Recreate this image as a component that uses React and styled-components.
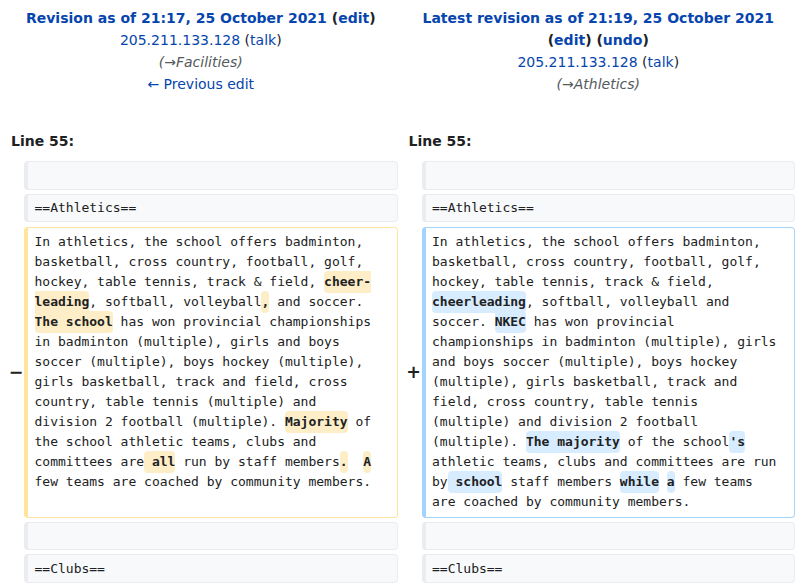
import React from 'react';
import styled, { createGlobalStyle } from 'styled-components';

const GlobalStyle = createGlobalStyle`
  body {
    margin: 0;
    background: #fff;
    color: #202122;
    font-family: 'DejaVu Sans', sans-serif;
  }
`;

const DiffTable = styled.div`
  display: grid;
  grid-template-columns: 16px 1fr 16px 1fr;
  column-gap: 4px;
  row-gap: 4px;
  padding: 7px 4px 0;
  width: 799px;
  box-sizing: border-box;
`;

const TitleCell = styled.div`
  grid-column: span 2;
  text-align: center;
  font-size: 14px;
  line-height: 22px;
  padding-bottom: 31px;
`;

const TitleLine = styled.div`
  font-weight: ${(p) => (p.$bold ? 'bold' : 'normal')};
`;

const Link = styled.a`
  color: #0645ad;
  text-decoration: none;
`;

const Summary = styled.div`
  font-style: italic;
  color: #54595d;
`;

const LineNo = styled.div`
  grid-column: span 2;
  font-size: 14px;
  line-height: 22px;
  font-weight: bold;
  padding: 0 0 5px 7px;
`;

const Marker = styled.div`
  display: flex;
  align-items: center;
  justify-content: center;
  padding-left: 8px;
  font-size: 17.5px;
  font-weight: bold;
  color: #202122;
`;

const borders = {
  context: '#eaecf0',
  deleted: '#ffe49c',
  added: '#a3d3ff',
};

const Line = styled.div`
  font-family: 'DejaVu Sans Mono', monospace;
  font-size: 13px;
  line-height: 20px;
  white-space: pre-wrap;
  word-wrap: break-word;
  padding: ${(p) => (p.$kind === 'context' ? '3.25px' : '4.25px')} 12px
    ${(p) => (p.$kind === 'context' ? '3.25px' : '4.5px')} 6.5px;
  margin-top: ${(p) => (p.$kind === 'context' ? '0' : '1px')};
  min-height: 20px;
  border: 1px solid ${(p) => borders[p.$kind]};
  border-left-width: 4px;
  border-radius: 4px;
  background: ${(p) => (p.$kind === 'context' ? '#f8f9fa' : '#fff')};
`;

const Change = styled.span`
  font-weight: bold;
  border-radius: 4px;
  padding: 3.25px 0;
  background: ${(p) => (p.$kind === 'added' ? '#d8ecff' : '#feeec8')};
`;

const Del = (props) => <Change $kind="deleted" {...props} />;
const Ins = (props) => <Change $kind="added" {...props} />;

const Context = ({ text }) => (
  <>
    <Marker />
    <Line $kind="context">{text}</Line>
    <Marker />
    <Line $kind="context">{text}</Line>
  </>
);

export default function App() {
  return (
    <>
      <GlobalStyle />
      <DiffTable>
        <TitleCell>
          <TitleLine $bold>
            <Link>Revision as of 21:17, 25 October 2021</Link> (<Link>edit</Link>)
          </TitleLine>
          <TitleLine>
            <Link>205.211.133.128</Link> (<Link>talk</Link>)
          </TitleLine>
          <Summary>(→Facilities)</Summary>
          <TitleLine>
            <Link>← Previous edit</Link>
          </TitleLine>
        </TitleCell>
        <TitleCell>
          <TitleLine $bold>
            <Link>Latest revision as of 21:19, 25 October 2021</Link> (<Link>edit</Link>) (<Link>undo</Link>)
          </TitleLine>
          <TitleLine>
            <Link>205.211.133.128</Link> (<Link>talk</Link>)
          </TitleLine>
          <Summary>(→Athletics)</Summary>
        </TitleCell>

        <LineNo>Line 55:</LineNo>
        <LineNo>Line 55:</LineNo>

        <Context text="" />
        <Context text="==Athletics==" />

        <Marker>−</Marker>
        <Line $kind="deleted">
          In athletics, the school offers badminton, basketball, cross country, football, golf, hockey, table tennis, track &amp; field, <Del>cheer-leading</Del>, softball, volleyball<Del>,</Del> and soccer. <Del>The school</Del> has won provincial championships in badminton (multiple), girls and boys soccer (multiple), boys hockey (multiple), girls basketball, track and field, cross country, table tennis (multiple) and division 2 football (multiple). <Del>Majority</Del> of the school athletic teams, clubs and committees are<Del> all</Del> run by staff members<Del>.</Del>{'  '}<Del>A</Del> few teams are coached by community members.
        </Line>
        <Marker>+</Marker>
        <Line $kind="added">
          In athletics, the school offers badminton, basketball, cross country, football, golf, hockey, table tennis, track &amp; field, <Ins>cheerleading</Ins>, softball, volleyball and soccer. <Ins>NKEC</Ins> has won provincial championships in badminton (multiple), girls and boys soccer (multiple), boys hockey (multiple), girls basketball, track and field, cross country, table tennis (multiple) and division 2 football (multiple). <Ins>The majority</Ins> of the school<Ins>'s</Ins> athletic teams, clubs and committees are run by<Ins> school</Ins> staff members <Ins>while</Ins> <Ins>a</Ins> few teams are coached by community members.
        </Line>

        <Context text="" />
        <Context text="==Clubs==" />
      </DiffTable>
    </>
  );
}
